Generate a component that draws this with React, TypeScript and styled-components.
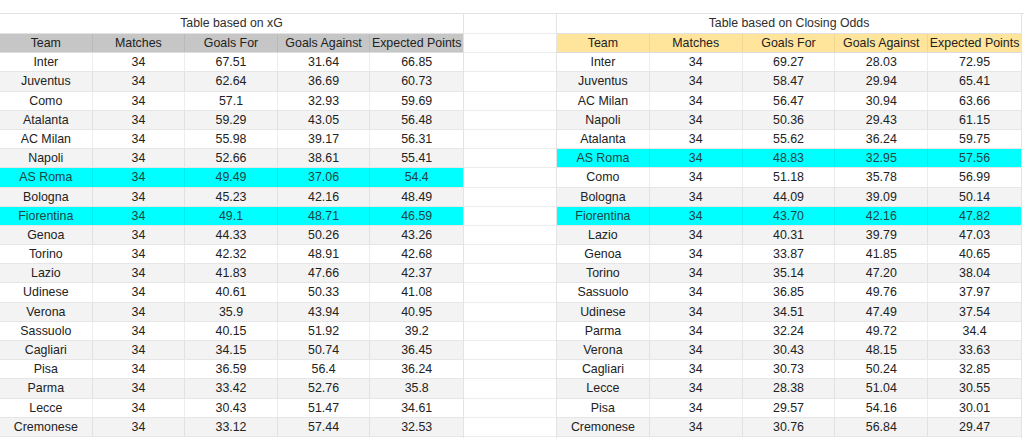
import React from 'react';
import styled, { createGlobalStyle } from 'styled-components';

type Row = [string, number, string, string, string];

const xgRows: Row[] = [
  ['Inter', 34, '67.51', '31.64', '66.85'],
  ['Juventus', 34, '62.64', '36.69', '60.73'],
  ['Como', 34, '57.1', '32.93', '59.69'],
  ['Atalanta', 34, '59.29', '43.05', '56.48'],
  ['AC Milan', 34, '55.98', '39.17', '56.31'],
  ['Napoli', 34, '52.66', '38.61', '55.41'],
  ['AS Roma', 34, '49.49', '37.06', '54.4'],
  ['Bologna', 34, '45.23', '42.16', '48.49'],
  ['Fiorentina', 34, '49.1', '48.71', '46.59'],
  ['Genoa', 34, '44.33', '50.26', '43.26'],
  ['Torino', 34, '42.32', '48.91', '42.68'],
  ['Lazio', 34, '41.83', '47.66', '42.37'],
  ['Udinese', 34, '40.61', '50.33', '41.08'],
  ['Verona', 34, '35.9', '43.94', '40.95'],
  ['Sassuolo', 34, '40.15', '51.92', '39.2'],
  ['Cagliari', 34, '34.15', '50.74', '36.45'],
  ['Pisa', 34, '36.59', '56.4', '36.24'],
  ['Parma', 34, '33.42', '52.76', '35.8'],
  ['Lecce', 34, '30.43', '51.47', '34.61'],
  ['Cremonese', 34, '33.12', '57.44', '32.53'],
];

const oddsRows: Row[] = [
  ['Inter', 34, '69.27', '28.03', '72.95'],
  ['Juventus', 34, '58.47', '29.94', '65.41'],
  ['AC Milan', 34, '56.47', '30.94', '63.66'],
  ['Napoli', 34, '50.36', '29.43', '61.15'],
  ['Atalanta', 34, '55.62', '36.24', '59.75'],
  ['AS Roma', 34, '48.83', '32.95', '57.56'],
  ['Como', 34, '51.18', '35.78', '56.99'],
  ['Bologna', 34, '44.09', '39.09', '50.14'],
  ['Fiorentina', 34, '43.70', '42.16', '47.82'],
  ['Lazio', 34, '40.31', '39.79', '47.03'],
  ['Genoa', 34, '33.87', '41.85', '40.65'],
  ['Torino', 34, '35.14', '47.20', '38.04'],
  ['Sassuolo', 34, '36.85', '49.76', '37.97'],
  ['Udinese', 34, '34.51', '47.49', '37.54'],
  ['Parma', 34, '32.24', '49.72', '34.4'],
  ['Verona', 34, '30.43', '48.15', '33.63'],
  ['Cagliari', 34, '30.73', '50.24', '32.85'],
  ['Lecce', 34, '28.38', '51.04', '30.55'],
  ['Pisa', 34, '29.57', '54.16', '30.01'],
  ['Cremonese', 34, '30.76', '56.84', '29.47'],
];

const headers = ['Team', 'Matches', 'Goals For', 'Goals Against', 'Expected Points'];
const highlighted = ['AS Roma', 'Fiorentina'];

const GlobalStyle = createGlobalStyle`
  html, body {
    margin: 0;
    padding: 0;
    background: #ffffff;
    overflow: hidden;
  }
  body {
    font-family: "Liberation Sans", Arial, sans-serif;
    color: #222;
  }
`;

const Sheet = styled.div`
  width: 1024px;
  height: 438px;
  padding-top: 13px;
  box-sizing: border-box;
  display: flex;
  background: #fff;
`;

const TableBlock = styled.div<{ $width: number }>`
  width: ${p => p.$width}px;
  display: flex;
  flex-direction: column;
  border-top: 1px solid #e3e3e3;
  border-right: 1px solid #e3e3e3;
  box-sizing: border-box;
`;

const Title = styled.div`
  height: 19px;
  line-height: 19px;
  text-align: center;
  font-size: 12.3px;
  color: #2e2e2e;
  border-bottom: 1px solid #e3e3e3;
`;

const GridRow = styled.div<{ $bg: string }>`
  display: grid;
  grid-template-columns: repeat(5, 1fr);
  height: 19.2px;
  background: ${p => p.$bg};
  border-bottom: 1px solid #e6e6e6;
  box-sizing: border-box;
`;

const Cell = styled.div<{ $tint?: boolean }>`
  font-size: 12.4px;
  line-height: 18px;
  text-align: center;
  white-space: nowrap;
  overflow: hidden;
  color: ${p => (p.$tint ? '#1f4444' : '#222')};
  border-right: 1px solid rgba(0, 0, 0, 0.07);
  &:last-child {
    border-right: none;
  }
`;

const HeadRow = styled(GridRow)`
  border-bottom: 1px solid #dcdcdc;
`;

const HeadCell = styled(Cell)`
  color: #222;
  border-right-color: rgba(0, 0, 0, 0.06);
`;

const GapColumn = styled.div`
  width: 93px;
  display: flex;
  flex-direction: column;
  border-top: 1px solid #e3e3e3;
  border-right: 1px solid #e3e3e3;
  box-sizing: border-box;
`;

const GapCell = styled.div<{ $h: number }>`
  height: ${p => p.$h}px;
  border-bottom: 1px solid #ececec;
  box-sizing: border-box;
`;

const Tail = styled.div`
  flex: 1;
  border-top: 1px solid #e3e3e3;
`;

const rowBg = (team: string, i: number) =>
  highlighted.includes(team) ? '#00ffff' : i % 2 === 1 ? '#f3f3f3' : '#ffffff';

const DataTable: React.FC<{ title: string; rows: Row[]; headBg: string; width: number }> = ({
  title,
  rows,
  headBg,
  width,
}) => (
  <TableBlock $width={width}>
    <Title>{title}</Title>
    <HeadRow $bg={headBg}>
      {headers.map(h => (
        <HeadCell key={h}>{h}</HeadCell>
      ))}
    </HeadRow>
    {rows.map((r, i) => {
      const tint = highlighted.includes(r[0]);
      return (
        <GridRow key={r[0]} $bg={rowBg(r[0], i)}>
          {r.map((v, j) => (
            <Cell key={j} $tint={tint}>
              {v}
            </Cell>
          ))}
        </GridRow>
      );
    })}
  </TableBlock>
);

export default function App() {
  return (
    <>
      <GlobalStyle />
      <Sheet>
        <DataTable title="Table based on xG" rows={xgRows} headBg="#c6c6c6" width={464} />
        <GapColumn>
          <GapCell $h={20} />
          {Array.from({ length: 21 }).map((_, i) => (
            <GapCell key={i} $h={19.2} />
          ))}
        </GapColumn>
        <DataTable title="Table based on Closing Odds" rows={oddsRows} headBg="#ffe49c" width={465} />
        <Tail />
      </Sheet>
    </>
  );
}
